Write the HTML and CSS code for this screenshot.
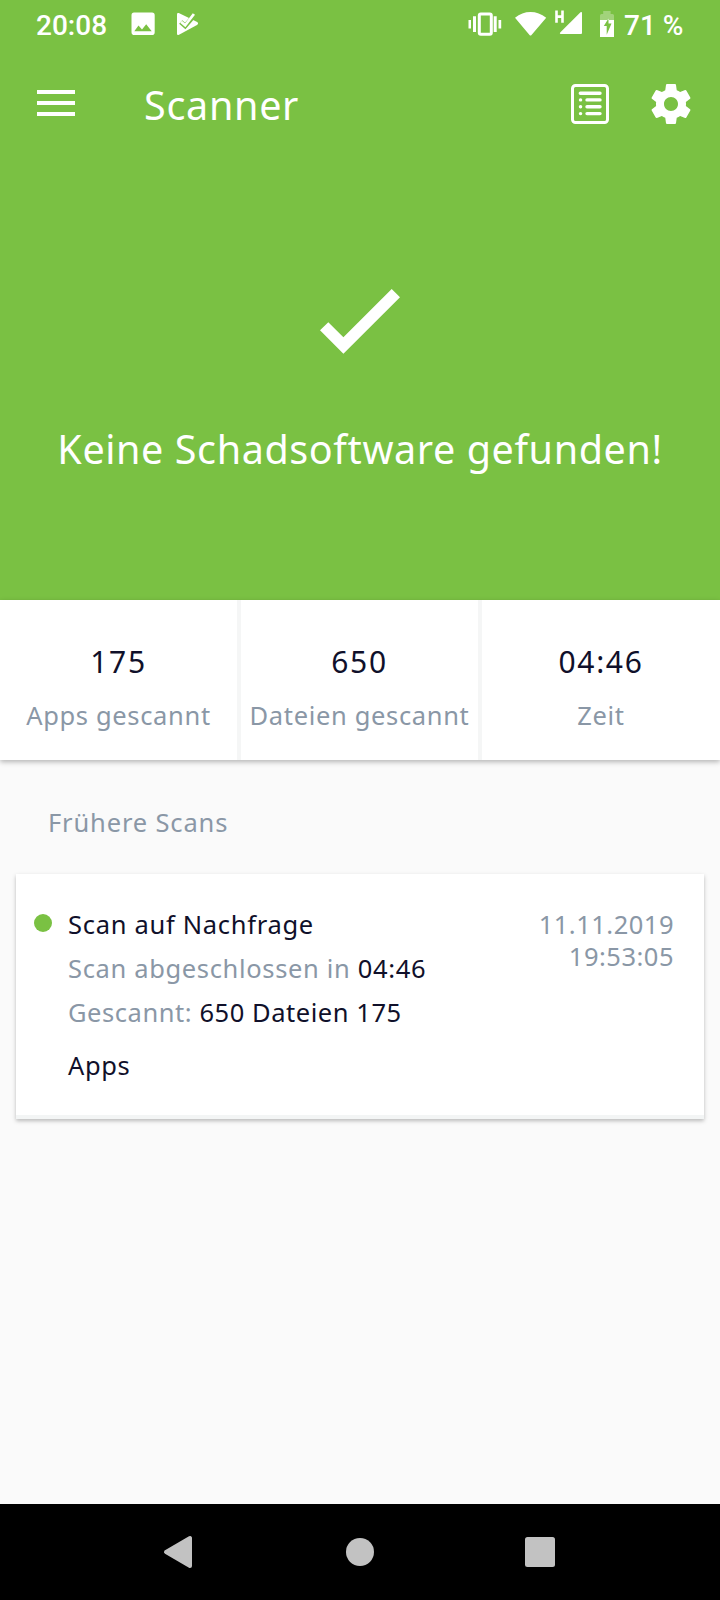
FILE: index.html
```html
<!DOCTYPE html>
<html lang="de">
<head>
<meta charset="utf-8">
<title>Scanner</title>
<link rel="stylesheet" href="styles.css">
</head>
<body>
<div class="screen">
  <section class="hero">
    <div class="status-bar">
      <span class="clock">20:08</span>
      <svg class="icon-image" width="25" height="26" viewBox="131 11 25 26"><path fill="#fff" fill-rule="evenodd" d="M134 12.500H152Q154.700 12.500 154.700 15.300V32.200Q154.700 35 152 35H134.300Q131.500 35 131.500 32.200V15.300Q131.500 12.500 134 12.500ZM134.300 31.300H151.700L146.200 24.200L142 29.500L138.500 25.600Z"/></svg>
      <svg class="icon-play" width="24" height="26" viewBox="176 11 24 26"><path fill="#fff" d="M177 14.300Q177 12.500 178.800 13L197.200 22Q199 23.500 197 25L179 34.700Q177 35.500 177 33.700Z"/><path fill="none" stroke="#7ac143" stroke-width="4.600" d="M180.700 22L185.200 26L195.500 14"/><path fill="none" stroke="#fff" stroke-width="2.800" d="M181 21.700L185.200 25.300L193.900 14"/></svg>
      <svg class="icon-vibrate" width="34" height="26" viewBox="468 11 34 26"><path fill="#fff" d="M468.500 20H471V28.500H468.500ZM473 16.200H476V32H473ZM493.700 16.200H496.700V32H493.700ZM498.500 20H501.200V28.500H498.500Z"/><rect x="479.300" y="14" width="12" height="20.300" rx="1.500" fill="none" stroke="#fff" stroke-width="3"/></svg>
      <svg class="icon-wifi" width="32" height="26" viewBox="515 11 32 26"><path fill="#fff" d="M515 17.700Q522 12 530.500 12T546.200 17.700L531.500 35Q530.500 36.200 529.500 35Z"/></svg>
      <svg class="icon-signal" width="29" height="26" viewBox="554 10 29 26"><path fill="none" stroke="#fff" stroke-width="2.600" d="M556.500 10.500V22.700M562.500 10.500V22.700M556 16.600H563"/><path fill="#fff" d="M582 12.500V33Q582 34 581 34H560.500Q559.300 33.500 560.200 32.500L580.500 12.200Q581.500 11.500 582 12.500Z"/></svg>
      <svg class="icon-battery" width="15" height="27" viewBox="600 11 15 27"><path fill="#fff" fill-opacity=".3" d="M600 20V15.500Q600 14 601.500 14H603.200V11H610.600V14H612.500Q614 14 614 15.500V20Z"/><path fill="#fff" fill-rule="evenodd" d="M600 20H614V37H600ZM608.500 18.500L603.800 26H606.700V34.700L611.500 23.500H608.500Z"/></svg>
      <span class="charge">71 %</span>
    </div>
    <div class="toolbar">
      <svg class="icon-menu" width="38" height="28" viewBox="37 89 38 28"><path fill="#fff" d="M37 90H75V94H37ZM37 101H75V105H37ZM37 112H75V116H37Z"/></svg>
      <h1 class="title">Scanner</h1>
      <svg class="icon-log" width="38" height="40" viewBox="571 84 38 40"><rect x="572.500" y="85.500" width="35" height="37" rx="3" fill="none" stroke="#fff" stroke-width="3"/><path stroke="#fff" stroke-width="3.400" stroke-linecap="round" d="M580.300 93.200H600M587 99.900H600M587 106.800H600M587 113.600H600M580.500 99.900h.1M580.500 106.800h.1M580.500 113.600h.1"/></svg>
      <svg class="icon-settings" width="48" height="48" viewBox="0 0 24 24"><path fill="#fff" d="M19.430 12.980c.04-.32.070-.64.070-.98s-.03-.66-.07-.98l2.110-1.650c.19-.15.240-.42.120-.64l-2-3.460c-.12-.22-.39-.3-.61-.22l-2.490 1c-.52-.4-1.080-.73-1.690-.98l-.38-2.650C14.460 2.180 14.250 2 14 2h-4c-.25 0-.46.180-.49.420l-.38 2.650c-.61.250-1.170.590-1.690.98l-2.490-1c-.23-.09-.49 0-.61.220l-2 3.460c-.13.220-.07.490.12.640l2.110 1.650c-.04.320-.07.650-.07.980s.03.660.07.980l-2.110 1.650c-.19.150-.24.420-.12.640l2 3.460c.12.220.39.300.61.220l2.490-1c.52.400 1.080.730 1.690.980l.38 2.650c.03.240.24.420.49.420h4c.25 0 .46-.18.490-.42l.38-2.650c.61-.25 1.170-.59 1.690-.98l2.490 1c.23.090.49 0 .61-.22l2-3.460c.12-.22.070-.49-.12-.64l-2.110-1.650zM12 15.500c-1.930 0-3.500-1.570-3.500-3.500s1.570-3.500 3.500-3.500 3.500 1.570 3.500 3.500-1.570 3.500-3.500 3.500z"/></svg>
    </div>
    <svg class="check" width="80" height="66" viewBox="320 288 80 66"><path fill="#fff" d="M320 330.300L328.300 322.200L343.400 337.300L391.700 289L400 297.200L343.400 353.700Z"/></svg>
    <p class="result">Keine Schadsoftware gefunden!</p>
  </section>
  <section class="stats">
    <div class="stat"><span class="number">175</span><span class="label">Apps gescannt</span></div>
    <div class="stat"><span class="number">650</span><span class="label">Dateien gescannt</span></div>
    <div class="stat"><span class="number">04:46</span><span class="label">Zeit</span></div>
  </section>
  <h2 class="section-title">Frühere Scans</h2>
  <article class="card">
    <span class="dot"></span>
    <div class="details">
      <div class="line name">Scan auf Nachfrage</div>
      <div class="line duration">Scan abgeschlossen in <b>04:46</b></div>
      <div class="line scanned">Gescannt: <b>650 Dateien 175</b></div>
      <div class="line apps"><b>Apps</b></div>
    </div>
    <div class="date"><span>11.11.2019</span><span>19:53:05</span></div>
  </article>
  <nav class="nav">
    <svg width="180" height="96" viewBox="90 1504 180 96"><path fill="#c2c2c2" stroke="#c2c2c2" stroke-width="4" stroke-linejoin="round" d="M166 1552L190 1538V1566Z"/></svg>
    <svg width="180" height="96" viewBox="270 1504 180 96"><circle cx="360" cy="1552" r="14" fill="#c2c2c2"/></svg>
    <svg width="180" height="96" viewBox="450 1504 180 96"><rect x="525" y="1537" width="30" height="30" rx="2.500" fill="#c2c2c2"/></svg>
  </nav>
</div>
</body>
</html>
```
FILE: styles.css
```css
body { margin: 0; }
svg { display: block; flex: none; }
.screen {
  display: flex;
  flex-direction: column;
  width: 720px;
  height: 1600px;
  overflow: hidden;
  background: #fafafa;
  color: #10102a;
  font: 25.5px/44px "Noto Sans", sans-serif;
  white-space: nowrap;
}
.hero {
  display: flex;
  flex-direction: column;
  align-items: center;
  height: 600px;
  background: #7ac143;
  color: #fff;
}
.status-bar {
  display: flex;
  align-items: center;
  box-sizing: border-box;
  width: 720px;
  height: 48px;
  padding-left: 36px;
  font: 500 28px/48px Roboto, sans-serif;
}
.clock { width: 95px; padding-top: 3px; }
.icon-play { margin-left: 20px; }
.icon-vibrate { margin-left: 268px; }
.icon-wifi { margin-left: 13px; }
.icon-signal { margin: -2px 0 0 7px; }
.icon-battery { margin-left: 17px; }
.charge { margin-left: 9px; padding-top: 3px; }
.toolbar {
  display: flex;
  align-items: center;
  box-sizing: border-box;
  width: 720px;
  height: 112px;
  padding-left: 37px;
}
.icon-menu { margin-top: -2px; }
.title {
  width: 427px;
  margin: 0 0 0 69px;
  padding-top: 2px;
  font-size: 39.5px;
  font-weight: 400;
  letter-spacing: .7px;
}
.icon-settings { margin-left: 38px; }
.check { margin-top: 128px; }
.result {
  margin: 69px 0 0;
  font-size: 39.5px;
  line-height: 52px;
  letter-spacing: .6px;
}
.stats {
  position: relative;
  display: grid;
  grid-template-columns: 237px 237px 238px;
  gap: 4px;
  height: 160px;
  background: #f5f6f6;
  box-shadow: 0 2px 5px rgba(0, 0, 0, .28);
}
.stat {
  display: flex;
  flex-direction: column;
  align-items: center;
  padding-top: 41px;
  background: #fff;
}
.number { font-size: 30px; line-height: 42px; letter-spacing: 1.7px; }
.label { margin-top: 12px; line-height: 40px; letter-spacing: .65px; color: #8a97a6; }
.section-title {
  margin: 40px 0 0 48px;
  font-size: 25.5px;
  font-weight: 400;
  letter-spacing: .85px;
  color: #8a97a6;
}
.card {
  display: flex;
  box-sizing: border-box;
  height: 245px;
  margin: 30px 16px 0;
  padding: 28px 30px 0 18px;
  background: #fff;
  border-bottom: 4px solid #f3f5f5;
  box-shadow: 0 2px 4px rgba(0, 0, 0, .26);
}
.dot { width: 18px; height: 18px; margin: 12px 16px 0 0; border-radius: 50%; background: #7ac143; }
.details { flex: 1; letter-spacing: .65px; color: #8a97a6; }
.details b, .name { font-weight: 400; color: #10102a; }
.name { letter-spacing: .7px; }
.scanned { letter-spacing: .55px; }
.apps { margin-top: 9px; }
.date {
  display: flex;
  flex-direction: column;
  align-items: flex-end;
  padding-top: 6px;
  line-height: 32px;
  letter-spacing: .5px;
  color: #8a97a6;
}
.nav { display: flex; justify-content: center; height: 96px; margin-top: auto; background: #000; }
```
